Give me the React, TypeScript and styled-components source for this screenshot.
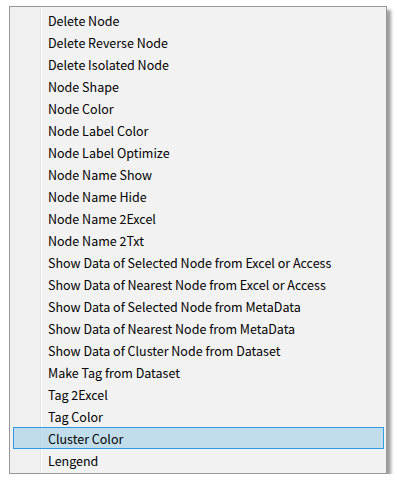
import React from "react";
import styled, { createGlobalStyle, css } from "styled-components";

const Global = createGlobalStyle`
  body {
    margin: 0;
    background: #ffffff;
    font-family: "Noto Sans CJK SC", "Noto Sans", sans-serif;
  }
`;

const items = [
  "Delete Node",
  "Delete Reverse Node",
  "Delete Isolated Node",
  "Node Shape",
  "Node Color",
  "Node Label Color",
  "Node Label Optimize",
  "Node Name Show",
  "Node Name Hide",
  "Node Name 2Excel",
  "Node Name 2Txt",
  "Show Data of Selected Node from Excel or Access",
  "Show Data of Nearest Node from Excel or Access",
  "Show Data of Selected Node from MetaData",
  "Show Data of Nearest Node from MetaData",
  "Show Data of Cluster Node from Dataset",
  "Make Tag from Dataset",
  "Tag 2Excel",
  "Tag Color",
  "Cluster Color",
  "Lengend",
];

const Page = styled.div`
  padding: 6px 0 0 9px;
`;

// menu box with the grey gutter on the left
const Menu = styled.div`
  width: 378px;
  box-sizing: border-box;
  border: 1px solid #979797;
  background: linear-gradient(
    to right,
    #f0f0f0 0,
    #f0f0f0 30px,
    #e2e3e3 30px,
    #e2e3e3 31px,
    #ffffff 31px,
    #ffffff 32px,
    #f2f2f2 32px
  );
  padding: 2px 0;
  box-shadow: 4px 4px 3px rgba(0, 0, 0, 0.38);
  display: flex;
  flex-direction: column;
`;

const Item = styled.div<{ $active?: boolean }>`
  height: 22px;
  margin: 0 2px 0 3px;
  box-sizing: border-box;
  border: 1px solid transparent;
  padding-left: 34px;
  display: flex;
  align-items: center;
  font-size: 12.5px;
  color: #000000;
  white-space: nowrap;
  ${(p) =>
    p.$active &&
    css`
      background: rgba(153, 204, 230, 0.55);
      border-color: #2f9be0;
    `}
`;

export default function App() {
  return (
    <>
      <Global />
      <Page>
        <Menu>
          {items.map((label) => (
            <Item key={label} $active={label === "Cluster Color"}>
              {label}
            </Item>
          ))}
        </Menu>
      </Page>
    </>
  );
}
